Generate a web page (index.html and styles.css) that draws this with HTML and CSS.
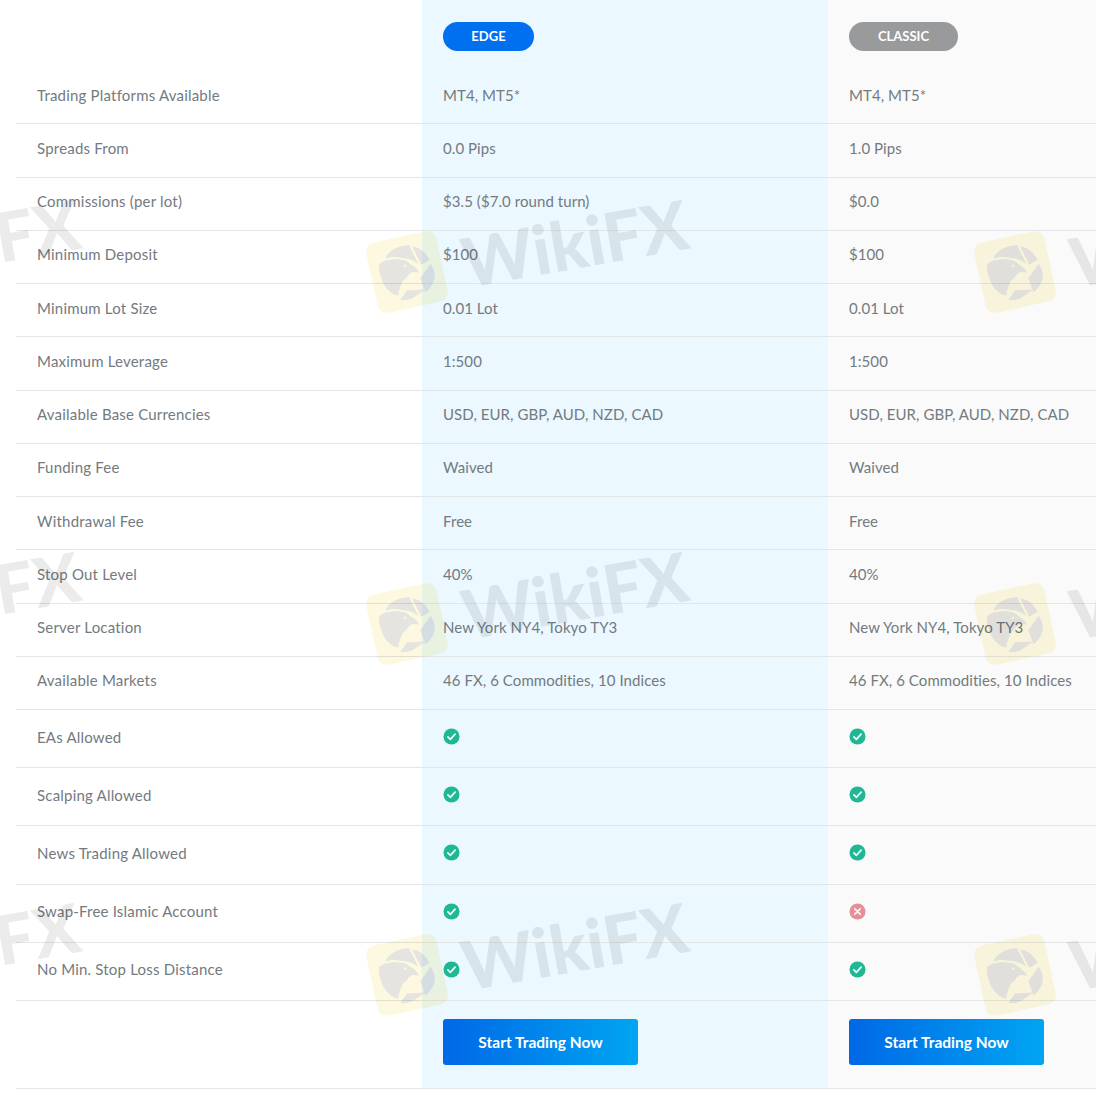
FILE: index.html
```html
<!DOCTYPE html>
<html lang="en">
<head>
<meta charset="utf-8">
<title>Account comparison</title>
<link rel="stylesheet" href="styles.css">
</head>
<body>
<svg class="defs" width="0" height="0" aria-hidden="true">
  <symbol id="eagle" viewBox="0 0 80 80">
    <rect x="5" y="5" width="70" height="70" rx="9" fill="#fdf8e0"/>
    <g transform="rotate(12 40 40)" fill="#e6e4e1">
      <path d="M19 27C21 20 31 14 42 14L51 32C46 28 40 26 33.500 26C28 25 23 25 19 27z"/>
      <path d="M45 15C52 16 58 20 62 28L54 33z"/>
      <path d="M63 32C69 40 69 51 58 60L53 46z"/>
      <path d="M40 58L58 57L48 64C44 67 38 68 33.500 67z"/>
      <path d="M13 32C17 29 20 28 24 28C28 27 31 27 33.500 28C38 28 41 30 43 32C47 34 50 37 52 41C50 40 47 40 45 40C43 41 41 43 40 45C37 47 35 49 35 51C33 55 32 59 31 63C27 62 24 60 22 58C18 54 16 50 15 46C13 42 12 37 13 32z"/>
      <circle cx="38" cy="34" r="1.200" fill="#fdf8e0"/>
    </g>
  </symbol>
  <symbol id="check" viewBox="0 0 18 18">
    <circle cx="9" cy="9" r="8.500" fill="#20b795"/>
    <path d="M5.200 9.400l2.600 2.600 5-5.400" fill="none" stroke="#e9fbf6" stroke-width="1.900" stroke-linecap="round" stroke-linejoin="round"/>
  </symbol>
  <symbol id="cross" viewBox="0 0 18 18">
    <circle cx="9" cy="9" r="8.500" fill="#e58f98"/>
    <path d="M6.200 6.200l5.600 5.600M11.800 6.200l-5.600 5.600" fill="none" stroke="#fdeef0" stroke-width="2" stroke-linecap="round"/>
  </symbol>
</svg>

<main class="page">
  <div class="table">
    <div class="row row-head">
      <div class="cell"></div>
      <div class="cell edge"><span class="pill pill-edge">EDGE</span></div>
      <div class="cell classic"><span class="pill pill-classic">CLASSIC</span></div>
    </div>
    <div class="row"><div class="cell label">Trading Platforms Available</div><div class="cell edge">MT4, MT5*</div><div class="cell classic">MT4, MT5*</div></div>
    <div class="row"><div class="cell label">Spreads From</div><div class="cell edge">0.0 Pips</div><div class="cell classic">1.0 Pips</div></div>
    <div class="row"><div class="cell label">Commissions (per lot)</div><div class="cell edge">$3.5 ($7.0 round turn)</div><div class="cell classic">$0.0</div></div>
    <div class="row"><div class="cell label">Minimum Deposit</div><div class="cell edge">$100</div><div class="cell classic">$100</div></div>
    <div class="row"><div class="cell label">Minimum Lot Size</div><div class="cell edge">0.01 Lot</div><div class="cell classic">0.01 Lot</div></div>
    <div class="row"><div class="cell label">Maximum Leverage</div><div class="cell edge">1:500</div><div class="cell classic">1:500</div></div>
    <div class="row"><div class="cell label">Available Base Currencies</div><div class="cell edge">USD, EUR, GBP, AUD, NZD, CAD</div><div class="cell classic">USD, EUR, GBP, AUD, NZD, CAD</div></div>
    <div class="row"><div class="cell label">Funding Fee</div><div class="cell edge">Waived</div><div class="cell classic">Waived</div></div>
    <div class="row"><div class="cell label">Withdrawal Fee</div><div class="cell edge">Free</div><div class="cell classic">Free</div></div>
    <div class="row"><div class="cell label">Stop Out Level</div><div class="cell edge">40%</div><div class="cell classic">40%</div></div>
    <div class="row"><div class="cell label">Server Location</div><div class="cell edge">New York NY4, Tokyo TY3</div><div class="cell classic">New York NY4, Tokyo TY3</div></div>
    <div class="row"><div class="cell label">Available Markets</div><div class="cell edge">46 FX, 6 Commodities, 10 Indices</div><div class="cell classic">46 FX, 6 Commodities, 10 Indices</div></div>
    <div class="row row-icon"><div class="cell label">EAs Allowed</div><div class="cell edge"><svg class="mark"><use href="#check"/></svg></div><div class="cell classic"><svg class="mark"><use href="#check"/></svg></div></div>
    <div class="row row-icon"><div class="cell label">Scalping Allowed</div><div class="cell edge"><svg class="mark"><use href="#check"/></svg></div><div class="cell classic"><svg class="mark"><use href="#check"/></svg></div></div>
    <div class="row row-icon"><div class="cell label">News Trading Allowed</div><div class="cell edge"><svg class="mark"><use href="#check"/></svg></div><div class="cell classic"><svg class="mark"><use href="#check"/></svg></div></div>
    <div class="row row-icon"><div class="cell label">Swap-Free Islamic Account</div><div class="cell edge"><svg class="mark"><use href="#check"/></svg></div><div class="cell classic"><svg class="mark"><use href="#cross"/></svg></div></div>
    <div class="row row-icon"><div class="cell label">No Min. Stop Loss Distance</div><div class="cell edge"><svg class="mark"><use href="#check"/></svg></div><div class="cell classic"><svg class="mark"><use href="#check"/></svg></div></div>
    <div class="row row-cta">
      <div class="cell"></div>
      <div class="cell edge"><a class="btn" href="#">Start Trading Now</a></div>
      <div class="cell classic"><a class="btn" href="#">Start Trading Now</a></div>
    </div>
  </div>

  <div class="strip strip-1">
    <div class="wm"><svg class="wm-logo"><use href="#eagle"/></svg><span class="wm-text">WikiFX</span></div>
    <div class="wm"><svg class="wm-logo"><use href="#eagle"/></svg><span class="wm-text">WikiFX</span></div>
    <div class="wm"><svg class="wm-logo"><use href="#eagle"/></svg><span class="wm-text">WikiFX</span></div>
  </div>
  <div class="strip strip-2">
    <div class="wm"><svg class="wm-logo"><use href="#eagle"/></svg><span class="wm-text">WikiFX</span></div>
    <div class="wm"><svg class="wm-logo"><use href="#eagle"/></svg><span class="wm-text">WikiFX</span></div>
    <div class="wm"><svg class="wm-logo"><use href="#eagle"/></svg><span class="wm-text">WikiFX</span></div>
  </div>
  <div class="strip strip-3">
    <div class="wm"><svg class="wm-logo"><use href="#eagle"/></svg><span class="wm-text">WikiFX</span></div>
    <div class="wm"><svg class="wm-logo"><use href="#eagle"/></svg><span class="wm-text">WikiFX</span></div>
    <div class="wm"><svg class="wm-logo"><use href="#eagle"/></svg><span class="wm-text">WikiFX</span></div>
  </div>
</main>
</body>
</html>
```
FILE: styles.css
```css
* { box-sizing: border-box; }
html, body { margin: 0; padding: 0; background: #fff; }
.defs { position: absolute; }
.page {
  position: relative;
  height: 1104px;
  overflow: hidden;
  font-family: "Lato", "Liberation Sans", sans-serif;
  font-size: 15px;
  letter-spacing: .07px;
  color: #737a80;
}
.table { margin-left: 16px; }
.row {
  display: grid;
  grid-template-columns: 406px 406px 1fr;
  height: 53.25px;
  border-bottom: 1px solid #e3e6e8;
}
.row-head { height: 71px; border-bottom: 0; }
.row-icon { height: 58.2px; }
.row-cta { height: 88px; }
.cell {
  display: flex;
  align-items: center;
  padding: 0 0 5px 21px;
  white-space: nowrap;
}
.label { letter-spacing: .2px; }
.row-head .cell { padding: 1px 0 0 21px; }
.row-icon .cell { padding-bottom: 4px; }
.edge { background: #ebf8ff; }
.classic { background: #fafafa; }
.pill {
  display: flex;
  align-items: center;
  justify-content: center;
  height: 29px;
  border-radius: 15px;
  color: #fff;
  font-size: 13px;
  font-weight: 700;
  letter-spacing: 0;
}
.pill-edge { width: 91px; background: #0070ee; }
.pill-classic { width: 109px; background: #999a9b; }
.mark { width: 17px; height: 17px; }
.btn {
  display: flex;
  align-items: center;
  justify-content: center;
  width: 195px;
  height: 46px;
  border-radius: 3px;
  background: linear-gradient(90deg, #0068e6, #00a5f2);
  color: #fff;
  font-size: 15.5px;
  font-weight: 700;
  letter-spacing: 0;
  text-decoration: none;
}
.strip {
  position: absolute;
  left: -242px;
  display: flex;
  pointer-events: none;
  mix-blend-mode: multiply;
}
.strip-1 { top: 231px; }
.strip-2 { top: 583px; }
.strip-3 { top: 934px; }
.wm {
  flex: none;
  width: 608px;
  display: flex;
  align-items: center;
  gap: 15px;
  transform: rotate(-10deg);
  transform-origin: 41px 41px;
}
.wm-logo { width: 82px; height: 82px; flex: none; transform: rotate(-2deg); }
.wm-text {
  font-family: "Lato", "Liberation Sans", sans-serif;
  font-size: 68px;
  font-weight: 900;
  line-height: 82px;
  letter-spacing: 0;
  color: #ebebeb;
}
```
